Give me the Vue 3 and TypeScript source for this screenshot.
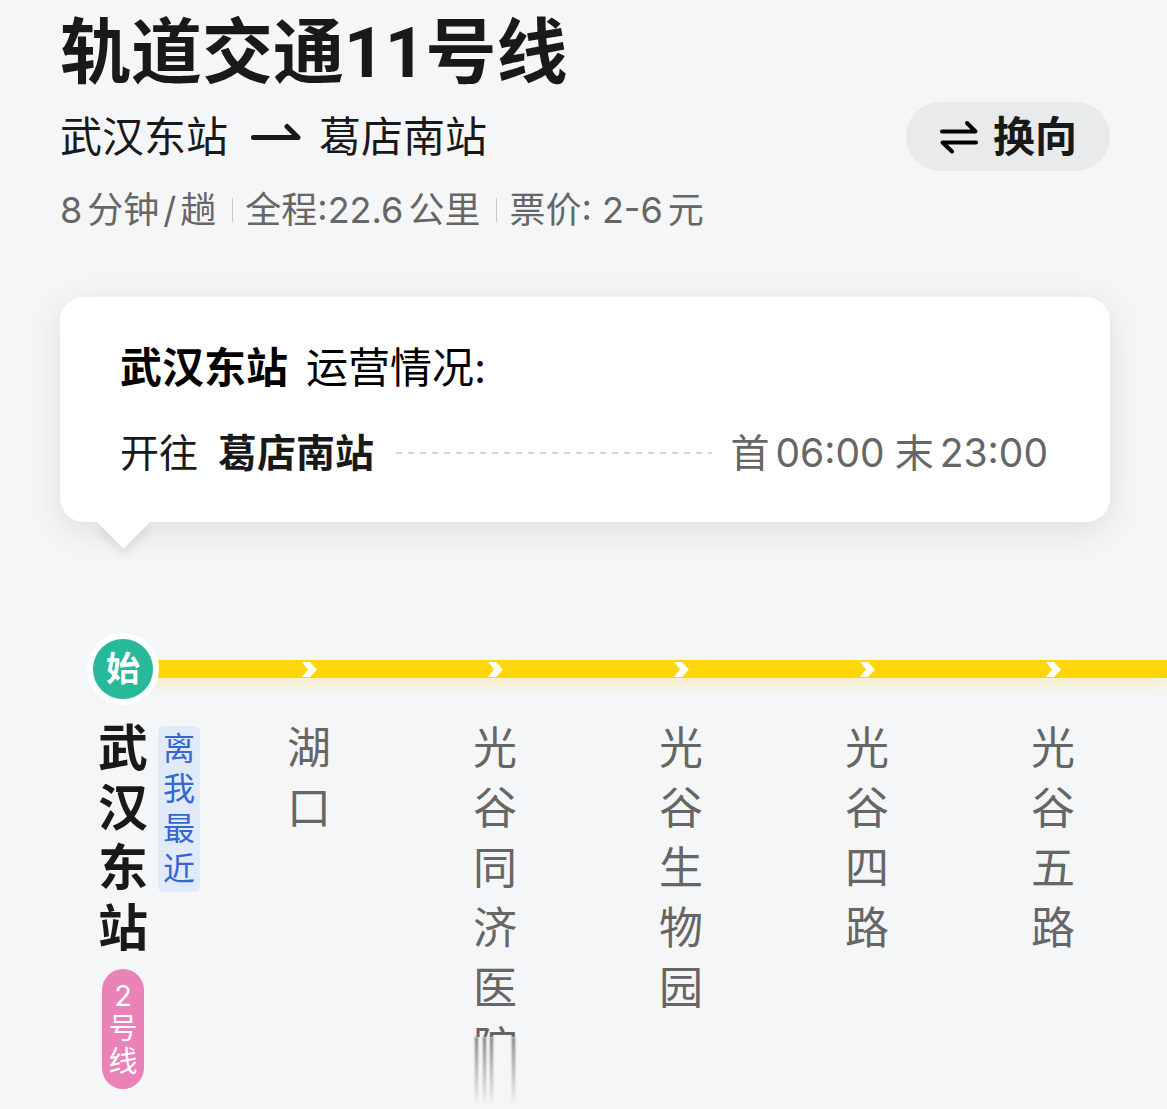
<script setup lang="ts">
interface Station {
  name: string
  current?: boolean
  tag?: string
  transfer?: string
  clipped?: string
}

const line = '轨道交通11号线'
const from = '武汉东站'
const to = '葛店南站'

const stations: Station[] = [
  { name: '武汉东站', current: true, tag: '离我最近', transfer: '2号线' },
  { name: '湖口' },
  { name: '光谷同济医', clipped: '院' },
  { name: '光谷生物园' },
  { name: '光谷四路' },
  { name: '光谷五路' },
]
</script>

<template>
  <main class="page">
    <header class="header">
      <h1 class="title">{{ line }}</h1>
      <div class="route">
        <p class="direction">
          <span>{{ from }}</span>
          <svg class="arrow" viewBox="0 0 50 30" fill="none" aria-hidden="true">
            <path d="M2.500 15.500H47L36 4.500" stroke="#191919" stroke-width="5" stroke-linecap="round" stroke-linejoin="round" />
          </svg>
          <span>{{ to }}</span>
        </p>
        <button class="swap" type="button">
          <svg class="swap-icon" viewBox="0 0 38 34" fill="none" stroke="#000" stroke-width="4" stroke-linecap="round" stroke-linejoin="round" aria-hidden="true">
            <path d="M2 11.500H35.500L27 3" />
            <path d="M36 22.500H2.500L12 31.500" />
          </svg>
          <span>换向</span>
        </button>
      </div>
      <ul class="facts">
        <li><span>8</span><span>分钟<span class="slash">/</span>趟</span></li>
        <li><span>全程:22.6</span><span>公里</span></li>
        <li><span>票价: 2-6</span><span>元</span></li>
      </ul>
    </header>

    <section class="card">
      <h2 class="card-title"><strong>{{ from }}</strong><span>运营情况:</span></h2>
      <div class="schedule">
        <span>开往</span>
        <strong class="terminal">{{ to }}</strong>
        <span class="dashes"></span>
        <div class="times">
          <span>首</span><time>06:00</time>
          <span class="last">末</span><time>23:00</time>
        </div>
      </div>
    </section>

    <section class="track">
      <div class="rail"></div>
      <ol class="stations">
        <li v-for="station in stations" :key="station.name" class="station" :class="{ current: station.current }">
          <div class="stop">
            <span v-if="station.current" class="start">始</span>
            <svg v-else class="chevron" viewBox="0 0 15 15" aria-hidden="true">
              <path d="M0 0H8L15 7.500L8 15H0L6 7.500Z" fill="#fff" />
            </svg>
          </div>
          <div class="label">
            <span class="name">{{ station.name }}</span>
            <span v-if="station.tag" class="tag">{{ station.tag }}</span>
          </div>
          <template v-if="station.clipped">
            <span class="clipped">{{ station.clipped }}</span>
            <span class="smear"><i></i><i></i><i></i><i></i></span>
          </template>
          <span v-if="station.transfer" class="transfer">{{ station.transfer }}</span>
        </li>
      </ol>
    </section>
  </main>
</template>

<style>
body {
  margin: 0;
  background: #f5f6f8;
}
</style>

<style scoped>
.page {
  min-height: 100vh;
  box-sizing: border-box;
  overflow: hidden;
  background: #f5f6f8;
  color: #191919;
  font-family: Inter, "Noto Sans CJK SC", sans-serif;
}

h1,
h2,
p,
ul,
ol {
  margin: 0;
  padding: 0;
  font-weight: 400;
  list-style: none;
}

strong {
  font-weight: 700;
}

.header {
  padding: 11px 57px 0 60px;
}

.title {
  font-family: Roboto, "Noto Sans CJK SC", sans-serif;
  font-size: 71px;
  font-weight: 700;
  line-height: 84px;
}

.route {
  display: flex;
  align-items: center;
  justify-content: space-between;
  margin-top: 7px;
}

.direction {
  display: flex;
  align-items: center;
  font-size: 42px;
  line-height: 60px;
}

.arrow {
  width: 50px;
  height: 30px;
  margin: 0 18px 0 23px;
}

.swap {
  display: flex;
  align-items: center;
  gap: 15px;
  height: 69px;
  padding: 0 33px 0 34px;
  border: 0;
  border-radius: 35px;
  background: #e9eaeb;
  color: #191919;
  font: 700 42px/60px Inter, "Noto Sans CJK SC", sans-serif;
}

.swap-icon {
  width: 38px;
  height: 34px;
}

.facts {
  display: flex;
  margin-top: 15px;
  color: #666;
  font-size: 36px;
  line-height: 48px;
}

.facts li {
  display: flex;
  align-items: center;
  gap: 5px;
}

.facts li + li::before {
  content: "";
  width: 1px;
  height: 24px;
  margin: 0 7px 0 16px;
  background: #c8c9cb;
}

.slash {
  margin: 0 4px;
}

.card {
  position: relative;
  margin: 63px 57px 0 60px;
  padding: 41px 62px 39px 60px;
  border-radius: 24px;
  background: #fff;
  box-shadow: 0 8px 36px rgba(0, 0, 0, 0.1);
}

.card::after {
  content: "";
  position: absolute;
  left: 45px;
  bottom: -19px;
  width: 37px;
  height: 37px;
  background: #fff;
  box-shadow: 6px 6px 9px rgba(0, 0, 0, 0.08);
  transform: rotate(45deg);
  clip-path: polygon(90% 0, 150% 0, 150% 150%, 0 150%, 0 90%);
}

.card-title {
  display: flex;
  gap: 18px;
  color: #000;
  font-size: 42px;
  line-height: 60px;
}

.schedule {
  display: flex;
  align-items: center;
  margin-top: 25px;
  font-size: 39px;
  line-height: 60px;
}

.terminal {
  margin-left: 20px;
}

.dashes {
  flex: 1;
  height: 2px;
  margin: 0 18px 0 22px;
  background: repeating-linear-gradient(90deg, #d4d4d4 0 6px, transparent 6px 12px);
}

.times {
  display: flex;
  gap: 6px;
  color: #666;
}

.last {
  margin-left: 4px;
}

.track {
  position: relative;
  margin: 111px 0 0 30px;
}

.rail {
  position: absolute;
  top: 27px;
  right: 0;
  left: 93px;
  height: 18px;
  background: #fed609;
  box-shadow: 0 9px 9px rgba(254, 214, 9, 0.16);
}

.stations {
  position: relative;
  display: flex;
}

.station {
  display: flex;
  flex: none;
  flex-direction: column;
  align-items: center;
  width: 186px;
  color: #666;
  font-size: 44px;
}

.stop {
  display: flex;
  align-items: center;
  justify-content: center;
  height: 72px;
}

.start {
  width: 60px;
  height: 60px;
  border: 6px solid #fff;
  border-radius: 50%;
  background: #28b99b;
  color: #fff;
  font-size: 34px;
  font-weight: 700;
  line-height: 60px;
  text-align: center;
}

.chevron {
  width: 15px;
  height: 15px;
}

.label {
  position: relative;
  margin-top: 13px;
}

.name {
  display: block;
  width: 1em;
  line-height: 60px;
  word-break: break-all;
}

.current .name {
  color: #191919;
  font-size: 50px;
  font-weight: 700;
}

.tag {
  position: absolute;
  top: 8px;
  left: 60px;
  width: 32px;
  padding: 3px 5px;
  border-radius: 6px;
  background: #e1eaf8;
  color: #3467d4;
  font-size: 32px;
  line-height: 40px;
  word-break: break-all;
}

.transfer {
  width: 30px;
  margin-top: 11px;
  padding: 10px 6px 11px;
  border-radius: 21px;
  background: #e982b7;
  color: #fff;
  font-size: 29px;
  line-height: 33px;
  text-align: center;
  word-break: break-all;
}

.clipped {
  height: 19px;
  overflow: hidden;
  line-height: 60px;
}

.smear {
  display: flex;
  width: 40px;
  height: 70px;
  filter: blur(1px);
}

.smear i {
  width: 3px;
  margin-right: 5px;
  background: linear-gradient(#777, rgba(119, 119, 119, 0));
}

.smear i:nth-child(2) {
  margin-right: 4px;
}

.smear i:last-child {
  margin: 0 0 0 auto;
}
</style>
